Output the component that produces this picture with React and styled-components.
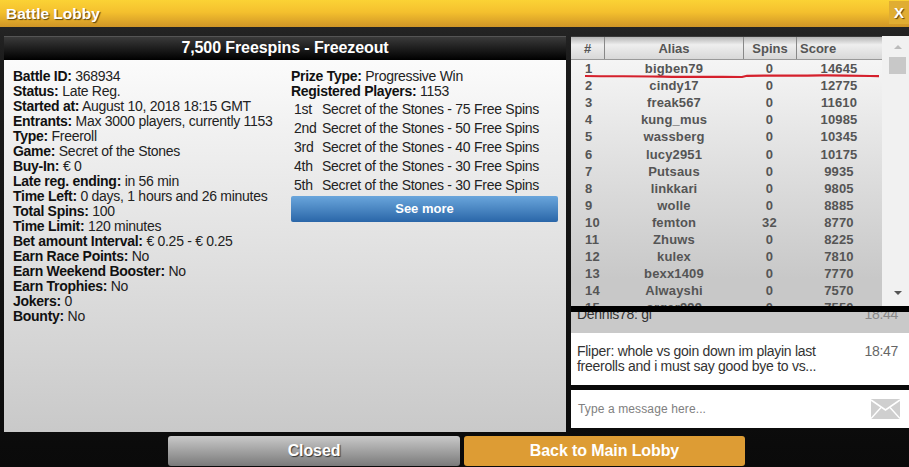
import styled, { createGlobalStyle } from "styled-components";

const GlobalStyle = createGlobalStyle`
  html, body {
    margin: 0;
    padding: 0;
    background: #0a0a0a;
    overflow: hidden;
  }
  * {
    box-sizing: border-box;
  }
`;

const infoRows = [
  ["Battle ID:", "368934"],
  ["Status:", "Late Reg."],
  ["Started at:", "August 10, 2018 18:15 GMT"],
  ["Entrants:", "Max 3000 players, currently 1153"],
  ["Type:", "Freeroll"],
  ["Game:", "Secret of the Stones"],
  ["Buy-In:", "€ 0"],
  ["Late reg. ending:", "in 56 min"],
  ["Time Left:", "0 days, 1 hours and 26 minutes"],
  ["Total Spins:", "100"],
  ["Time Limit:", "120 minutes"],
  ["Bet amount Interval:", "€ 0.25 - € 0.25"],
  ["Earn Race Points:", "No"],
  ["Earn Weekend Booster:", "No"],
  ["Earn Trophies:", "No"],
  ["Jokers:", "0"],
  ["Bounty:", "No"],
];

const prizes = [
  ["1st", "Secret of the Stones - 75 Free Spins"],
  ["2nd", "Secret of the Stones - 50 Free Spins"],
  ["3rd", "Secret of the Stones - 40 Free Spins"],
  ["4th", "Secret of the Stones - 30 Free Spins"],
  ["5th", "Secret of the Stones - 30 Free Spins"],
];

const players = [
  ["bigben79", 0, 14645],
  ["cindy17", 0, 12775],
  ["freak567", 0, 11610],
  ["kung_mus", 0, 10985],
  ["wassberg", 0, 10345],
  ["lucy2951", 0, 10175],
  ["Putsaus", 0, 9935],
  ["linkkari", 0, 9805],
  ["wolle", 0, 8885],
  ["femton", 32, 8770],
  ["Zhuws", 0, 8225],
  ["kulex", 0, 7810],
  ["bexx1409", 0, 7770],
  ["Alwayshi", 0, 7570],
  ["orgar999", 0, 7550],
];

function App() {
  return (
    <Page>
      <GlobalStyle />
      <TitleBar>
        <Title>Battle Lobby</Title>
        <CloseBox>X</CloseBox>
      </TitleBar>
      <Main>
        <LeftPanel>
          <PanelHeader>7,500 Freespins - Freezeout</PanelHeader>
          <PanelBody>
            <InfoColumn>
              {infoRows.map(([label, value]) => (
                <InfoRow key={label}>
                  <b>{label}</b> {value}
                </InfoRow>
              ))}
            </InfoColumn>
            <PrizeColumn>
              <InfoRow>
                <b>Prize Type:</b> Progressive Win
              </InfoRow>
              <InfoRow>
                <b>Registered Players:</b> 1153
              </InfoRow>
              <PrizeList>
                {prizes.map(([place, prize]) => (
                  <PrizeRow key={place}>
                    <Place>{place}</Place>
                    <span>{prize}</span>
                  </PrizeRow>
                ))}
              </PrizeList>
              <SeeMore>See more</SeeMore>
            </PrizeColumn>
          </PanelBody>
        </LeftPanel>
        <RightColumn>
          <Leaderboard>
            <TableArea>
              <HeadRow>
                <HeadCell $w={34}>#</HeadCell>
                <HeadCell $w={139}>Alias</HeadCell>
                <HeadCell $w={53}>Spins</HeadCell>
                <HeadCell $w={85} $left>
                  Score
                </HeadCell>
              </HeadRow>
              <Rows>
                {players.map(([alias, spins, score], i) => (
                  <Row key={alias}>
                    <RankCell>{i + 1}</RankCell>
                    <AliasCell>{alias}</AliasCell>
                    <SpinsCell>{spins}</SpinsCell>
                    <ScoreCell>{score}</ScoreCell>
                  </Row>
                ))}
              </Rows>
            </TableArea>
            <Scrollbar>
              <ArrowUp />
              <Thumb />
              <ArrowDown />
            </Scrollbar>
            <RedLine viewBox="0 0 310 8" width="310" height="8">
              <path
                d="M14 4 C40 4.5 70 4 92 4.6 C120 5.2 150 4.8 171 5 L176 3.8 C200 3.4 230 3.8 250 3.4 C270 3.2 290 3.8 308 4.2"
                fill="none"
                stroke="#d5202c"
                strokeWidth="2.2"
              />
            </RedLine>
          </Leaderboard>
          <Chat>
            <OldMessage>
              <MessageText>Dennis78: gl</MessageText>
              <MessageTime $old>18:44</MessageTime>
            </OldMessage>
            <NewMessage>
              <MessageText>
                Fliper: whole vs goin down im playin last
                <br />
                freerolls and i must say good bye to vs...
              </MessageText>
              <MessageTime>18:47</MessageTime>
            </NewMessage>
          </Chat>
          <InputRow>
            <Placeholder>Type a message here...</Placeholder>
            <svg width="29" height="20" viewBox="0 0 29 20">
              <rect width="29" height="20" fill="#cfcfcf" />
              <path d="M0 1 L14.5 11 L29 1" fill="none" stroke="#fff" strokeWidth="1.6" />
              <path d="M0 19.5 L10 8.5 M29 19.5 L19 8.5" fill="none" stroke="#fff" strokeWidth="1.4" />
            </svg>
          </InputRow>
        </RightColumn>
      </Main>
      <Footer>
        <ClosedButton>Closed</ClosedButton>
        <BackButton>Back to Main Lobby</BackButton>
      </Footer>
    </Page>
  );
}
export default App;

const Page = styled.div`
  width: 909px;
  height: 467px;
  display: flex;
  flex-direction: column;
  overflow: hidden;
  font-family: "Liberation Sans", Arial, sans-serif;
  background: linear-gradient(#2b2b2b 0, #1c1c1c 60px, #0a0a0a 100%);
`;
const TitleBar = styled.div`
  height: 27px;
  flex: none;
  display: flex;
  align-items: center;
  justify-content: space-between;
  background: linear-gradient(#fbd235 0%, #f4c02e 45%, #cf9526 100%);
`;
const Title = styled.div`
  margin-left: 6px;
  font-size: 15.5px;
  font-weight: 700;
  color: #fff;
  text-shadow: 1px 1px 1px #5a4410;
`;
const CloseBox = styled.div`
  width: 20px;
  height: 23px;
  margin-bottom: 2px;
  display: flex;
  align-items: center;
  justify-content: center;
  background: #e0ad32;
  color: #fff;
  font-size: 15px;
  font-weight: 700;
  text-shadow: 1px 1px 1px #5a4410;
`;
const Main = styled.div`
  height: 396px;
  flex: none;
  margin-top: 9px;
  padding-left: 4px;
  display: flex;
  gap: 5px;
`;
const LeftPanel = styled.div`
  width: 562px;
  display: flex;
  flex-direction: column;
  background: linear-gradient(#ffffff 0%, #f0f0f0 25%, #c9c9c9 100%);
`;
const PanelHeader = styled.div`
  height: 24px;
  border-top: 1px solid #555;
  display: flex;
  align-items: center;
  justify-content: center;
  padding-bottom: 1px;
  font-size: 16px;
  font-weight: 700;
  letter-spacing: -0.1px;
  color: #fff;
  background: linear-gradient(#3a3a3a 0%, #000 100%);
`;
const PanelBody = styled.div`
  display: flex;
  padding: 9px 8px 0 9px;
  color: #222;
`;
const InfoColumn = styled.div`
  width: 278px;
  flex: none;
`;
const PrizeColumn = styled.div`
  flex: 1;
`;
const InfoRow = styled.div`
  font-size: 14px;
  line-height: 15px;
  white-space: nowrap;
  letter-spacing: -0.28px;
  b {
    color: #111;
  }
`;
const PrizeList = styled.div`
  margin-top: 0;
`;
const PrizeRow = styled.div`
  height: 19px;
  display: flex;
  align-items: center;
  padding-left: 3px;
  font-size: 14px;
  white-space: nowrap;
  letter-spacing: -0.26px;
`;
const Place = styled.span`
  width: 28px;
  flex: none;
`;
const SeeMore = styled.div`
  height: 26px;
  margin-top: 2px;
  border-radius: 2px;
  display: flex;
  align-items: center;
  justify-content: center;
  padding-bottom: 2px;
  font-size: 13px;
  font-weight: 700;
  color: #fff;
  background: linear-gradient(#6aa6dc 0%, #2a66a8 100%);
`;
const RightColumn = styled.div`
  width: 338px;
  display: flex;
  flex-direction: column;
`;
const Leaderboard = styled.div`
  height: 270px;
  flex: none;
  position: relative;
  display: flex;
  overflow: hidden;
  background: #f1f1f1;
`;
const TableArea = styled.div`
  width: 311px;
  flex: none;
  display: flex;
  flex-direction: column;
  background: linear-gradient(#fafafa 0%, #c8c8c8 90%);
`;
const HeadRow = styled.div`
  height: 24px;
  flex: none;
  display: flex;
  border-top: 1px solid #3a3a3a;
  border-bottom: 1px solid #999;
  background: linear-gradient(#b5b5b5 0%, #eeeeee 35%, #d8d8d8 100%);
`;
const HeadCell = styled.div`
  width: ${(p) => p.$w}px;
  display: flex;
  align-items: center;
  justify-content: ${(p) => (p.$left ? "flex-start" : "center")};
  padding-left: ${(p) => (p.$left ? "3px" : "0")};
  font-size: 13px;
  font-weight: 700;
  color: #555;
  border-right: ${(p) => (p.$left ? "none" : "1px solid #888")};
`;
const Rows = styled.div`
  padding-top: 0;
`;
const Row = styled.div`
  height: 17.1px;
  display: flex;
  align-items: center;
  font-size: 13px;
  font-weight: 700;
  letter-spacing: 0.15px;
  color: #555;
`;
const RankCell = styled.div`
  width: 34px;
  padding-left: 14px;
`;
const AliasCell = styled.div`
  width: 138px;
  text-align: center;
`;
const SpinsCell = styled.div`
  width: 53px;
  text-align: center;
`;
const ScoreCell = styled.div`
  width: 86px;
  text-align: center;
`;
const Scrollbar = styled.div`
  flex: 1;
  position: relative;
  display: flex;
  flex-direction: column;
  align-items: center;
  padding: 0 2px 0 6px;
  justify-content: space-between;
`;
const ArrowUp = styled.div`
  margin-top: 9px;
  width: 0;
  height: 0;
  border-left: 4px solid transparent;
  border-right: 4px solid transparent;
  border-bottom: 4px solid #bbb;
`;
const Thumb = styled.div`
  position: absolute;
  top: 21px;
  left: 7px;
  width: 17px;
  height: 17px;
  background: #c8c8c8;
`;
const ArrowDown = styled.div`
  margin-bottom: 11px;
  width: 0;
  height: 0;
  border-left: 4px solid transparent;
  border-right: 4px solid transparent;
  border-top: 4px solid #555;
`;
const RedLine = styled.svg`
  position: absolute;
  top: 36px;
  left: 0;
`;
const Chat = styled.div`
  height: 84px;
  flex: none;
  border-top: 6px solid #000;
  border-bottom: 5px solid #0a0a0a;
  display: flex;
  flex-direction: column;
  justify-content: flex-end;
  overflow: hidden;
`;
const OldMessage = styled.div`
  height: 21px;
  flex: none;
  display: flex;
  justify-content: space-between;
  align-items: flex-end;
  padding: 0 11px 11px 6px;
  background: #c9c9c9;
`;
const NewMessage = styled.div`
  height: 52px;
  flex: none;
  display: flex;
  justify-content: space-between;
  padding: 11px 11px 0 6px;
  background: #fff;
`;
const MessageText = styled.div`
  font-size: 14px;
  line-height: 15px;
  color: #333;
  white-space: nowrap;
  letter-spacing: -0.27px;
`;
const MessageTime = styled.div`
  font-size: 14px;
  line-height: 15px;
  letter-spacing: -0.3px;
  color: ${(p) => (p.$old ? "#888" : "#666")};
`;
const InputRow = styled.div`
  height: 38px;
  flex: none;
  display: flex;
  align-items: center;
  justify-content: space-between;
  padding: 0 9px 0 7px;
  background: #fff;
`;
const Placeholder = styled.div`
  font-size: 12px;
  letter-spacing: 0.12px;
  color: #808080;
`;
const Footer = styled.div`
  flex: 1;
  display: flex;
  gap: 4px;
  padding: 4px 0 1px 168px;
`;
const ClosedButton = styled.div`
  width: 292px;
  border-radius: 3px;
  display: flex;
  align-items: center;
  justify-content: center;
  font-size: 16px;
  font-weight: 700;
  letter-spacing: -0.1px;
  color: #fff;
  text-shadow: 1px 1px 1px #333;
  background: linear-gradient(#c9c9c9 0%, #7a7a7a 100%);
`;
const BackButton = styled.div`
  width: 281px;
  border-radius: 3px;
  display: flex;
  align-items: center;
  justify-content: center;
  font-size: 16px;
  font-weight: 700;
  letter-spacing: -0.1px;
  color: #fff;
  background: #dd9c34;
`;
